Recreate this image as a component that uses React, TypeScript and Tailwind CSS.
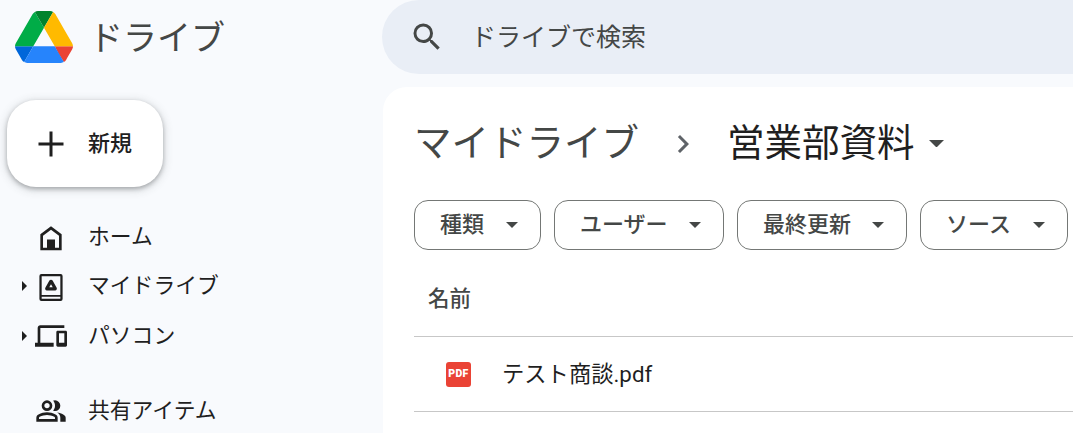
import React from "react";

const Caret = ({ className = "" }: { className?: string }) => (
  <svg viewBox="0 0 12 6" className={className} fill="currentColor"><path d="M0 0h12L6 6z" /></svg>
);

const DriveLogo = () => (
  <svg viewBox="0 0 87.3 78" className="w-[58px] h-[52px] shrink-0">
    <path d="m6.6 66.85 3.85 6.65c.8 1.4 1.95 2.5 3.3 3.3l13.75-23.8h-27.5c0 1.55.4 3.1 1.2 4.5z" fill="#0066da" />
    <path d="m43.65 25-13.75-23.8c-1.35.8-2.5 1.9-3.3 3.3l-25.4 44a9.06 9.06 0 0 0 -1.2 4.5h27.5z" fill="#00ac47" />
    <path d="m73.55 76.8c1.35-.8 2.5-1.9 3.3-3.3l1.6-2.75 7.65-13.25c.8-1.4 1.2-2.95 1.2-4.5h-27.502l5.852 11.5z" fill="#ea4335" />
    <path d="m43.65 25 13.75-23.8c-1.35-.8-2.9-1.2-4.5-1.2h-18.5c-1.6 0-3.15.45-4.5 1.2z" fill="#00832d" />
    <path d="m59.8 53h-32.3l-13.75 23.8c1.35.8 2.9 1.2 4.5 1.2h50.8c1.6 0 3.15-.45 4.5-1.2z" fill="#2684fc" />
    <path d="m73.4 26.5-12.7-22c-.8-1.4-1.95-2.5-3.3-3.3l-13.75 23.8 16.15 28h27.45c0-1.55-.4-3.1-1.2-4.5z" fill="#ffba00" />
  </svg>
);

const HomeIcon = () => (
  <svg viewBox="0 0 24 24" className="w-8 h-8" fill="#1f1f1f">
    <path fillRule="evenodd" d="M12 4L4 10v12h16V10l-8-6zm0 2.500l6 4.500v9h-3v-6H9v6H6v-9l6-4.500z" />
    <path d="M9 14h6v7H9z" />
  </svg>
);

const MyDriveIcon = () => (
  <svg viewBox="0 0 24 24" className="w-8 h-8" fill="#1f1f1f">
    <path fillRule="evenodd" d="M4.800 3h14.400a1.500 1.500 0 0 1 1.500 1.500v17.200a1.500 1.500 0 0 1-1.500 1.500H4.800a1.500 1.500 0 0 1-1.500-1.500V4.500A1.500 1.500 0 0 1 4.800 3zM5 4.700v14h14v-14zM5 20.100v1.400h14v-1.400z" />
    <path fillRule="evenodd" d="M12 7.300c.5 0 .95.25 1.200.65l3.050 5.350c.5.9-.15 2-1.150 2h-6.200c-1 0-1.650-1.100-1.150-2l3.050-5.350c.25-.4.7-.65 1.200-.65zm0 3.300l-1.300 2.300h2.600z" />
  </svg>
);

const DevicesIcon = () => (
  <svg viewBox="0 0 24 24" className="w-8 h-8" fill="#1f1f1f">
    <path d="M4 6h18V4H4c-1.100 0-2 .9-2 2v11H0v3h14v-3H4V6zm19 2h-6c-.55 0-1 .45-1 1v10c0 .55.45 1 1 1h6c.55 0 1-.45 1-1V9c0-.55-.45-1-1-1zm-1 9h-4v-7h4v7z" />
  </svg>
);

const PeopleIcon = () => (
  <svg viewBox="0 -960 960 960" className="w-8 h-8" fill="#1f1f1f">
    <path d="M40-160v-112q0-34 17.500-62.500T104-378q62-31 126-46.500T360-440q66 0 130 15.500T616-378q29 15 46.500 43.500T680-272v112H40Zm720 0v-120q0-44-24.500-84.500T666-434q51 6 96 20.500t84 35.500q36 20 55 44.500t19 53.500v120H760ZM360-480q-66 0-113-47t-47-113q0-66 47-113t113-47q66 0 113 47t47 113q0 66-47 113t-113 47Zm400-160q0 66-47 113t-113 47q-11 0-28-2.500t-28-5.500q27-32 41.500-71t14.500-81q0-42-14.500-81T544-792q14-5 28-6.500t28-1.500q66 0 113 47t47 113ZM120-240h480v-32q0-11-5.500-20T580-306q-54-27-109-40.500T360-360q-56 0-111 13.500T140-306q-9 5-14.500 14t-5.500 20v32Zm240-320q33 0 56.500-23.500T440-640q0-33-23.500-56.500T360-720q-33 0-56.500 23.500T280-640q0 33 23.500 56.500T360-560Z" />
  </svg>
);

const NavRow = ({ icon, label, arrow }: { icon: React.ReactNode; label: string; arrow?: boolean }) => (
  <div className="flex items-center h-[49.5px] shrink-0">
    <div className="w-[35px] flex justify-end pr-[8px]">
      {arrow && (
        <svg viewBox="0 0 5 10" className="w-[5px] h-[10px]" fill="#1f1f1f"><path d="M0 0l5 5-5 5z" /></svg>
      )}
    </div>
    <div className="w-8 flex justify-center">{icon}</div>
    <span className="ml-[21px] text-[21.8px] leading-none text-[#1f1f1f]">{label}</span>
  </div>
);

const Chip = ({ label, width }: { label: string; width: string }) => (
  <div className={`${width} h-[50px] shrink-0 rounded-[14px] border border-[#747775] flex items-center justify-between pl-[25px] pr-[22px]`}>
    <span className="text-[22px] leading-none font-medium text-[#444746]">{label}</span>
    <Caret className="w-3 h-[6px] text-[#444746]" />
  </div>
);

export default function App() {
  return (
    <div className="w-[1073px] h-[433px] overflow-hidden flex bg-[#f8fafd] font-['Roboto','Noto_Sans_CJK_JP',sans-serif]">
      <aside className="w-[382px] shrink-0 flex flex-col">
        <div className="h-[74px] shrink-0 flex items-center pl-[15px]">
          <DriveLogo />
          <span className="ml-[16px] pt-[2px] text-[34px] leading-none text-[#444746]">ドライブ</span>
        </div>
        <div className="mt-[26px] ml-[7px] w-[156px] h-[87px] shrink-0 rounded-[29px] bg-white flex items-center pl-[28px] shadow-[0_2px_4px_rgba(60,64,67,0.35),0_2px_8px_2px_rgba(60,64,67,0.15)]">
          <svg viewBox="0 0 32 32" className="w-8 h-8 shrink-0" fill="#1f1f1f"><path d="M14.500 3.500h3v11h11v3h-11v11h-3v-11h-11v-3h11z" /></svg>
          <span className="ml-[21px] text-[22px] leading-none font-medium text-[#1f1f1f]">新規</span>
        </div>
        <nav className="mt-[25px] flex flex-col">
          <NavRow icon={<HomeIcon />} label="ホーム" />
          <NavRow icon={<MyDriveIcon />} label="マイドライブ" arrow />
          <NavRow icon={<DevicesIcon />} label="パソコン" arrow />
          <div className="h-[26px] shrink-0" />
          <NavRow icon={<PeopleIcon />} label="共有アイテム" />
        </nav>
      </aside>

      <div className="flex-1 min-w-0 flex flex-col">
        <div className="h-[74px] shrink-0 rounded-l-[37px] bg-[#e9eef6] flex items-center pl-[27px]">
          <svg viewBox="0 0 24 24" className="w-9 h-9 shrink-0" fill="#444746">
            <path d="M15.500 14h-.79l-.28-.27A6.470 6.470 0 0 0 16 9.500 6.500 6.500 0 1 0 9.500 16c1.610 0 3.090-.59 4.230-1.570l.27.28v.79l5 4.990L20.490 19l-4.990-5zm-6 0C7.010 14 5 11.990 5 9.500S7.010 5 9.500 5 14 7.010 14 9.500 11.990 14 9.500 14z" />
          </svg>
          <span className="ml-[26px] text-[25px] leading-none text-[#444746]">ドライブで検索</span>
        </div>
        <main className="mt-[13px] ml-px flex-1 rounded-tl-[24px] bg-white pl-[31px]">
          <div className="h-[113px] flex items-center">
            <span className="text-[37.5px] leading-none text-[#444746]">マイドライブ</span>
            <svg viewBox="0 0 24 24" className="ml-[26px] w-9 h-9 shrink-0" fill="#5f6368"><path d="M8.590 16.590L13.170 12 8.590 7.410 10 6l6 6-6 6z" /></svg>
            <span className="ml-[26px] text-[37.5px] leading-none text-[#1f1f1f]">営業部資料</span>
            <Caret className="ml-[14px] w-[15px] h-[7.500px] text-[#444746]" />
          </div>
          <div className="flex gap-[13px]">
            <Chip label="種類" width="w-[127px]" />
            <Chip label="ユーザー" width="w-[170px]" />
            <Chip label="最終更新" width="w-[170px]" />
            <Chip label="ソース" width="w-[148px]" />
          </div>
          <div className="h-[87px] flex items-center pl-[14px] pt-[12px] border-b border-[#c7c7c7]">
            <span className="text-[21.5px] leading-none font-medium text-[#444746]">名前</span>
          </div>
          <div className="h-[75px] flex items-center pl-[32px] border-b border-[#c7c7c7]">
            <div className="w-[25px] h-[25px] rounded-[3px] bg-[#ea4335] flex items-center justify-center shrink-0">
              <span className="text-[10.5px] leading-none font-black text-white tracking-[0.3px]">PDF</span>
            </div>
            <span className="ml-[31px] text-[22.3px] leading-none text-[#1f1f1f]">テスト商談.pdf</span>
          </div>
        </main>
      </div>
    </div>
  );
}
